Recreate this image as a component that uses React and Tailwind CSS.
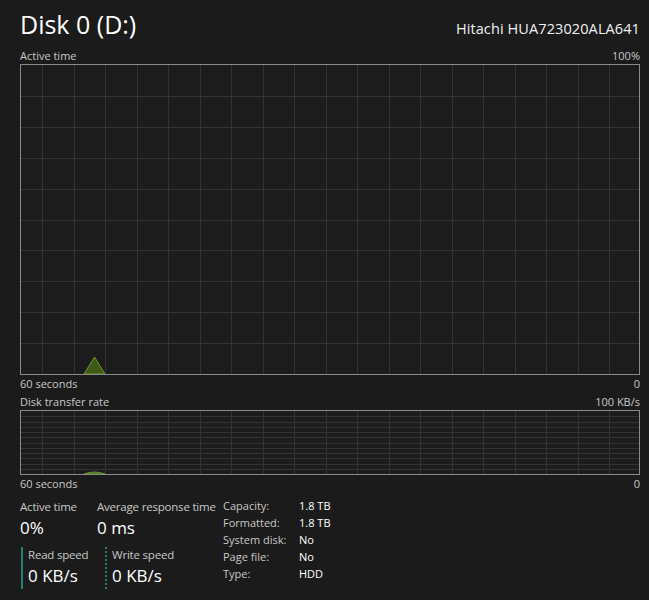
import React from "react";

const font = { fontFamily: '"Open Sans", "Noto Sans", sans-serif' };

function Grid({ width, height, rows, colStart, colStep }) {
  const cols = [];
  for (let x = colStart; x < width; x += colStep) cols.push(Math.round(x));
  const hLines = [];
  for (let i = 1; i < rows; i++) hLines.push(Math.round((height / rows) * i) + 0.5);
  return (
    <svg width={width} height={height} className="absolute inset-0">
      {cols.map((x) => (
        <line key={"v" + x} x1={x + 0.5} y1="0" x2={x + 0.5} y2={height} stroke="#333333" strokeWidth="1" />
      ))}
      {hLines.map((y) => (
        <line key={"h" + y} x1="0" y1={y} x2={width} y2={y} stroke="#333333" strokeWidth="1" />
      ))}
    </svg>
  );
}

function Stat({ label, value }) {
  return (
    <div className="flex flex-col whitespace-nowrap">
      <span className="text-[11.5px] leading-[16px] tracking-[-0.2px] text-[#c8c8c8]">{label}</span>
      <span className="text-[17px] leading-[26px] text-white">{value}</span>
    </div>
  );
}

const props = [
  ["Capacity:", "1.8 TB"],
  ["Formatted:", "1.8 TB"],
  ["System disk:", "No"],
  ["Page file:", "No"],
  ["Type:", "HDD"],
];

export default function App() {
  return (
    <div className="w-[649px] h-[600px] bg-[#1b1b1b] pl-5 pr-[9px] overflow-hidden" style={font}>
      <div className="flex justify-between items-baseline h-[48px] pt-[6px]">
        <span className="text-[25px] leading-[36px] text-white">Disk 0 (D:)</span>
        <span className="text-[14.5px] tracking-[0.1px] text-[#f0f0f0]">Hitachi HUA723020ALA641</span>
      </div>
      <div className="flex justify-between text-[11px] leading-[16px] text-[#c8c8c8]">
        <span>Active time</span>
        <span>100%</span>
      </div>
      <div className="relative h-[311px] w-[620px] border border-[#8a8a8a] bg-[#1c1c1c]">
        <Grid width={618} height={309} rows={10} colStart={21} colStep={31.5} />
        <svg width="618" height="309" className="absolute inset-0">
          <polygon points="63,309 73.5,292 84,309" fill="#3f5a17" stroke="#6b9a2c" strokeWidth="1" />
        </svg>
      </div>
      <div className="flex justify-between text-[11px] leading-[18px] text-[#c8c8c8]">
        <span>60 seconds</span>
        <span>0</span>
      </div>
      <div className="flex justify-between text-[11px] leading-[17px] text-[#c8c8c8]">
        <span>Disk transfer rate</span>
        <span>100 KB/s</span>
      </div>
      <div className="relative h-[65px] w-[620px] border border-[#8a8a8a] bg-[#1c1c1c]">
        <Grid width={618} height={63} rows={12} colStart={21} colStep={31.5} />
        <svg width="618" height="63" className="absolute inset-0">
          <path d="M63 63 Q73.5 59 84 63 Z" fill="#3f6a17" stroke="#6b9a2c" strokeWidth="1" />
        </svg>
      </div>
      <div className="flex justify-between text-[11px] leading-[18px] text-[#c8c8c8]">
        <span>60 seconds</span>
        <span>0</span>
      </div>
      <div className="flex mt-[6px]">
        <div className="flex flex-col w-[203px]">
          <div className="flex">
            <div className="w-[77px]">
              <Stat label="Active time" value="0%" />
            </div>
            <Stat label="Average response time" value="0 ms" />
          </div>
          <div className="flex mt-[6px] ml-[1px]">
            <div className="border-l-2 border-[#2a7f72] pl-[5px] w-[84px]">
              <Stat label="Read speed" value="0 KB/s" />
            </div>
            <div className="border-l-2 border-dotted border-[#2a7f72] pl-[5px]">
              <Stat label="Write speed" value="0 KB/s" />
            </div>
          </div>
        </div>
        <div className="flex flex-col -mt-[2px]">
          {props.map(([k, v]) => (
            <div key={k} className="flex text-[11px] leading-[17px]">
              <span className="w-[76px] text-[#c8c8c8]">{k}</span>
              <span className="text-white">{v}</span>
            </div>
          ))}
        </div>
      </div>
    </div>
  );
}
